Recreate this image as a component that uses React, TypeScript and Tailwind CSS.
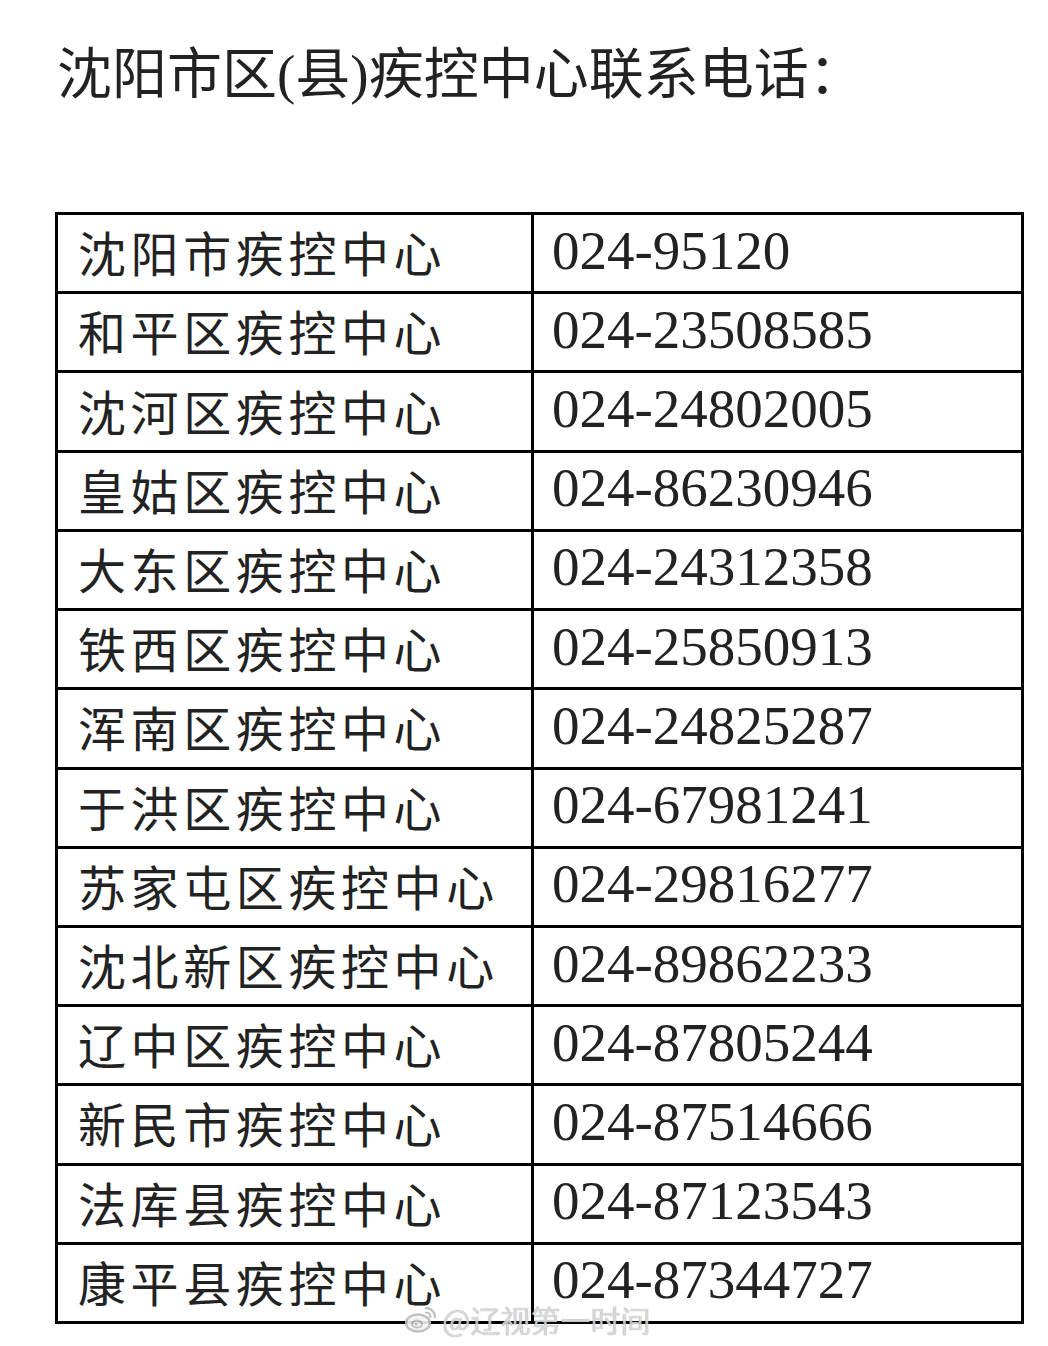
import React from "react";

const rows: [string, string][] = [
  ["沈阳市疾控中心", "024-95120"],
  ["和平区疾控中心", "024-23508585"],
  ["沈河区疾控中心", "024-24802005"],
  ["皇姑区疾控中心", "024-86230946"],
  ["大东区疾控中心", "024-24312358"],
  ["铁西区疾控中心", "024-25850913"],
  ["浑南区疾控中心", "024-24825287"],
  ["于洪区疾控中心", "024-67981241"],
  ["苏家屯区疾控中心", "024-29816277"],
  ["沈北新区疾控中心", "024-89862233"],
  ["辽中区疾控中心", "024-87805244"],
  ["新民市疾控中心", "024-87514666"],
  ["法库县疾控中心", "024-87123543"],
  ["康平县疾控中心", "024-87344727"],
];

function WeiboLogo() {
  return (
    <svg width="34" height="30" viewBox="0 0 34 30" fill="none">
      <ellipse cx="14" cy="19" rx="12" ry="8.5" stroke="#bbb" strokeWidth="2.4" fill="#f4f4f4" />
      <ellipse cx="13" cy="20" rx="5" ry="3.6" stroke="#bbb" strokeWidth="2" fill="none" />
      <circle cx="12" cy="20.5" r="1.3" fill="#bbb" />
      <path d="M22 4 A9 9 0 0 1 31 13" stroke="#bbb" strokeWidth="2.4" fill="none" strokeLinecap="round" />
      <path d="M22 8.5 A4.5 4.5 0 0 1 26.5 13" stroke="#bbb" strokeWidth="2.2" fill="none" strokeLinecap="round" />
    </svg>
  );
}

export default function App() {
  return (
    <div className="relative w-[1048px] h-[1346px] bg-white overflow-hidden font-['Noto_Sans_CJK_SC','Noto_Sans',sans-serif]">
      <div className="pl-[57px] pt-[42px] h-[97px] text-[55px] leading-[55px] text-[#222] whitespace-nowrap">
        沈阳市区<span className="font-['Liberation_Serif',serif]">(</span>县
        <span className="font-['Liberation_Serif',serif]">)</span>疾控中心联系电话：
      </div>
      <div className="ml-[55px] mt-[115px] w-[969px] h-[1112px] bg-black p-[3px] grid grid-cols-[473px_1fr] grid-rows-[repeat(14,1fr)] gap-[3px]">
        {rows.map(([name, phone]) => (
          <React.Fragment key={name}>
            <div className="bg-white flex items-center pl-[20px] pb-[4px] text-[48px] tracking-[4.6px] leading-none text-[#222] whitespace-nowrap">
              {name}
            </div>
            <div className="bg-white flex items-center pl-[18px] pb-[6px] text-[55px] leading-none text-[#222] whitespace-nowrap font-['Liberation_Serif',serif]">
              {phone}
            </div>
          </React.Fragment>
        ))}
      </div>
      <div className="absolute left-[404px] top-[1304px] flex items-center gap-[4px] opacity-90">
        <WeiboLogo />
        <span className="text-[30px] leading-none text-[#d4d4d4] [text-shadow:0_0_1px_#999]">
          @辽视第一时间
        </span>
      </div>
    </div>
  );
}
